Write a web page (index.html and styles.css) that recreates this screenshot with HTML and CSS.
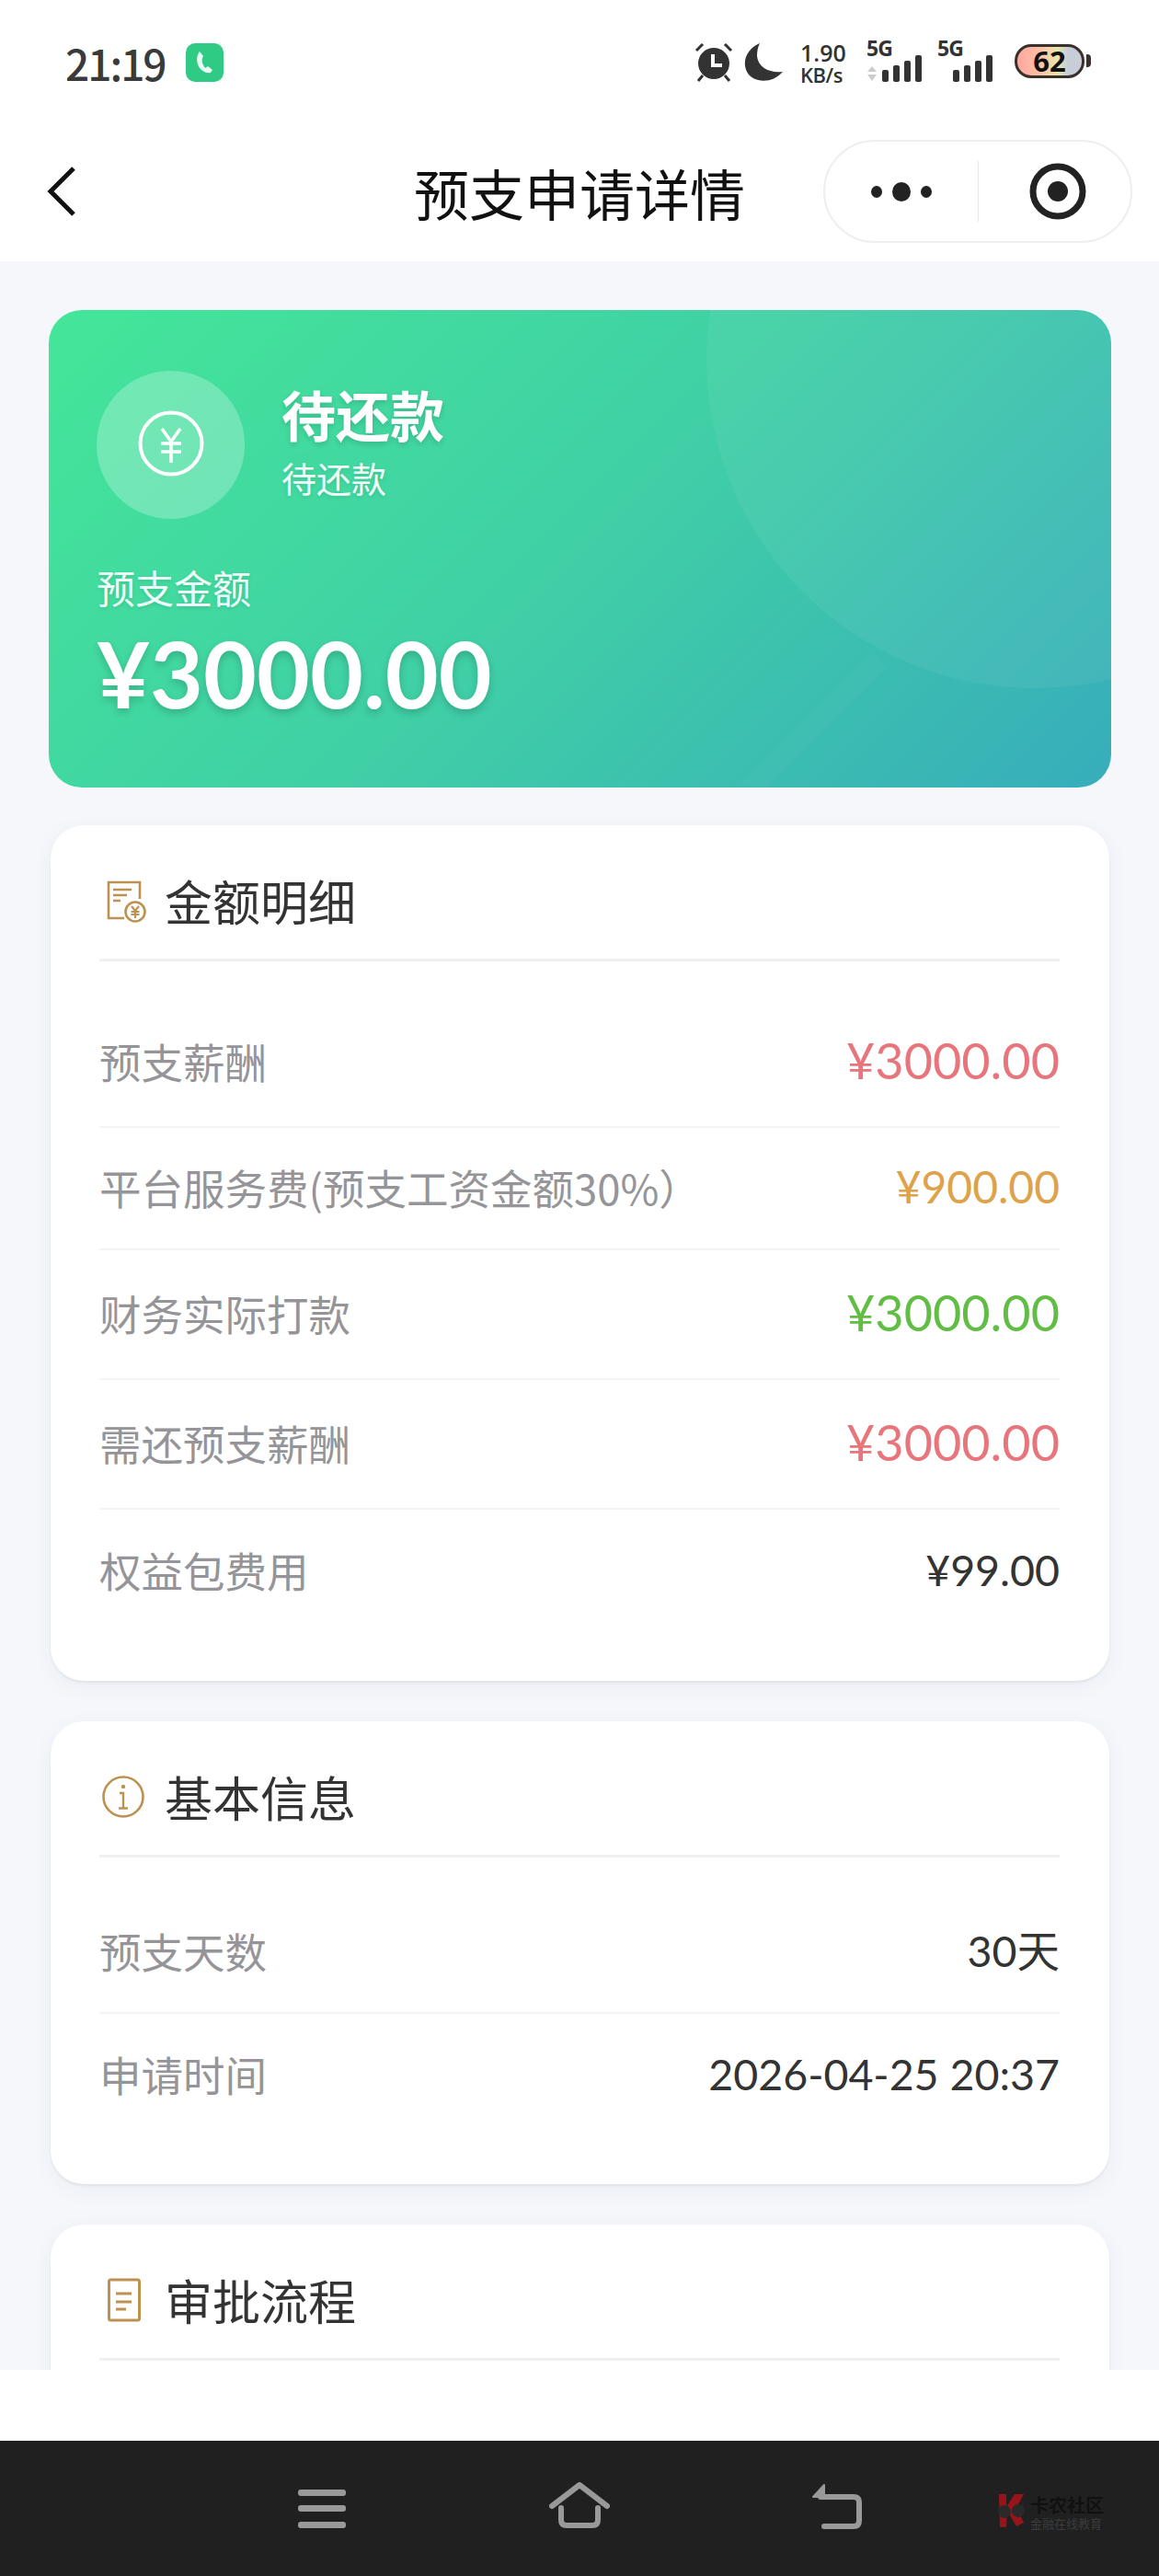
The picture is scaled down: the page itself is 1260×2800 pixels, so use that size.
FILE: index.html
```html
<!DOCTYPE html>
<html lang="zh-CN">

<head>
    <meta charset="UTF-8">
    <meta name="viewport" content="width=device-width, initial-scale=1.0">
    <title>预支申请详情</title>
    <link rel="stylesheet" href="styles.css">
</head>

<body>
    <div class="phone">
        <div class="status-bar">
            <div class="status-left">
                <span class="clock">21:19</span>
                <span class="call-badge">
                    <svg width="22" height="28" viewBox="0 0 22 28">
                        <path d="M6 2 C2 7 2 15 7 21 C10 24 14 26 18 25 L20 22 L15 18 L12 20 C9 16 8 12 9 9 L10 7 Z" fill="#e9fbf2" />
                    </svg>
                </span>
            </div>
            <div class="status-right">
                <svg class="st-alarm" width="44" height="42" viewBox="0 0 44 42">
                    <circle cx="22" cy="22" r="17" fill="#333" />
                    <path d="M21 12 V24 H31" fill="none" stroke="#fff" stroke-width="4" />
                    <path d="M3 8 L10 1 M41 8 L34 1 M5 41 L10 35 M39 41 L34 35" stroke="#333" stroke-width="3" />
                </svg>
                <svg class="st-moon" width="42" height="42" viewBox="0 0 42 42">
                    <path d="M17 0 C4 5 -3 19 3 31 C9 43 30 45 42 31 C28 33 15 26 14 14 C14 8 15 4 17 0 Z" fill="#333" />
                </svg>
                <div class="st-speed"><span>1.90</span><span class="st-unit">KB/s</span></div>
                <div class="st-signal">
                    <span class="st-5g">5G</span>
                    <svg width="64" height="44" viewBox="0 0 64 44">
                        <path d="M1 33 L6 27 L11 33 Z M1 36 L11 36 L6 43 Z" fill="#ccc" />
                        <rect x="17" y="31" width="7" height="13" rx="2" fill="#333" />
                        <rect x="29" y="26" width="7" height="18" rx="2" fill="#333" />
                        <rect x="41" y="21" width="7" height="23" rx="2" fill="#333" />
                        <rect x="53" y="15" width="7" height="29" rx="2" fill="#333" />
                    </svg>
                </div>
                <div class="st-signal">
                    <span class="st-5g">5G</span>
                    <svg width="64" height="44" viewBox="0 0 64 44">
                        <rect x="17" y="31" width="7" height="13" rx="2" fill="#333" />
                        <rect x="29" y="26" width="7" height="18" rx="2" fill="#333" />
                        <rect x="41" y="21" width="7" height="23" rx="2" fill="#333" />
                        <rect x="53" y="15" width="7" height="29" rx="2" fill="#333" />
                    </svg>
                </div>
                <div class="st-battery"><span class="st-level">62</span></div>
                <span class="st-nub"></span>
            </div>
        </div>

        <div class="nav-bar">
            <svg class="nav-back" width="32" height="56" viewBox="0 0 32 56">
                <path d="M29 3 L4 28 L29 53" fill="none" stroke="#111" stroke-width="5" />
            </svg>
            <h1 class="nav-title">预支申请详情</h1>
            <div class="capsule">
                <div class="capsule-more">
                    <i class="dot"></i><i class="dot dot-big"></i><i class="dot"></i>
                </div>
                <span class="capsule-line"></span>
                <div class="capsule-close">
                    <svg width="64" height="64" viewBox="0 0 64 64">
                        <circle cx="32" cy="32" r="27" fill="none" stroke="#222" stroke-width="7" />
                        <circle cx="32" cy="32" r="11" fill="#222" />
                    </svg>
                </div>
            </div>
        </div>

        <div class="content">
            <section class="hero">
                <span class="hero-circle"></span>
                <span class="hero-streak"></span>
                <div class="hero-top">
                    <div class="hero-icon">
                        <svg width="72" height="72" viewBox="0 0 72 72">
                            <circle cx="36" cy="36" r="33.5" fill="none" stroke="#fff" stroke-width="4" />
                            <path d="M26 20 L36 34 L46 20 M25 36 H47 M25 45 H47 M36 34 V57" fill="none" stroke="#fff" stroke-width="3.5" />
                        </svg>
                    </div>
                    <div class="hero-status">
                        <div class="hero-title">待还款</div>
                        <div class="hero-sub">待还款</div>
                    </div>
                </div>
                <div class="hero-label">预支金额</div>
                <div class="hero-amount">¥3000.00</div>
            </section>

            <section class="card">
                <div class="card-head">
                    <svg class="card-icon" width="48" height="48" viewBox="0 0 48 48">
                        <path d="M24 43 H7 V4 H41 V22" fill="none" stroke="#bd9152" stroke-width="2.6" />
                        <path d="M12 12 H32 M12 18 H27 M12 24 H20" stroke="#bd9152" stroke-width="2.6" />
                        <circle cx="36" cy="36" r="10.500" fill="#fff" stroke="#bd9152" stroke-width="2.6" />
                        <path d="M32 30 L36 35 L40 30 M31.500 36 H40.500 M31.500 39 H40.500 M36 35 V43" fill="none" stroke="#bd9152" stroke-width="2.2" />
                    </svg>
                    <h2 class="card-title">金额明细</h2>
                </div>
                <div class="rows rows-detail">
                    <div class="row row-big">
                        <span class="row-label">预支薪酬</span>
                        <span class="row-value big red">¥3000.00</span>
                    </div>
                    <div class="row">
                        <span class="row-label">平台服务费(预支工资金额30%）</span>
                        <span class="row-value mid orange">¥900.00</span>
                    </div>
                    <div class="row row-big">
                        <span class="row-label">财务实际打款</span>
                        <span class="row-value big green">¥3000.00</span>
                    </div>
                    <div class="row row-big">
                        <span class="row-label">需还预支薪酬</span>
                        <span class="row-value big red">¥3000.00</span>
                    </div>
                    <div class="row">
                        <span class="row-label">权益包费用</span>
                        <span class="row-value">¥99.00</span>
                    </div>
                </div>
            </section>

            <section class="card">
                <div class="card-head">
                    <svg class="card-icon" width="48" height="48" viewBox="0 0 48 48">
                        <circle cx="23" cy="24" r="21.500" fill="none" stroke="#bd9152" stroke-width="2.600" />
                        <circle cx="23" cy="13" r="2.200" fill="#bd9152" />
                        <path d="M19 20 H23 V36 M18 36.500 H28" fill="none" stroke="#bd9152" stroke-width="2.400" />
                    </svg>
                    <h2 class="card-title">基本信息</h2>
                </div>
                <div class="rows">
                    <div class="row">
                        <span class="row-label">预支天数</span>
                        <span class="row-value">30天</span>
                    </div>
                    <div class="row">
                        <span class="row-label">申请时间</span>
                        <span class="row-value">2026-04-25 20:37</span>
                    </div>
                </div>
            </section>

            <section class="card">
                <div class="card-head">
                    <svg class="card-icon" width="48" height="48" viewBox="0 0 48 48">
                        <rect x="7.500" y="2" width="33" height="44" rx="2" fill="none" stroke="#bd9152" stroke-width="3" />
                        <path d="M15 17 H32 M15 26 H32 M15 34 H26" stroke="#bd9152" stroke-width="3" />
                    </svg>
                    <h2 class="card-title">审批流程</h2>
                </div>
                <div class="rows"></div>
            </section>
        </div>

        <div class="bottom-white"></div>

        <div class="system-bar">
            <svg class="sys-menu" width="52" height="42" viewBox="0 0 52 42">
                <rect y="0" width="52" height="7" rx="3" fill="#999" />
                <rect y="17" width="52" height="7" rx="3" fill="#999" />
                <rect y="35" width="52" height="7" rx="3" fill="#999" />
            </svg>
            <svg class="sys-home" width="66" height="50" viewBox="0 0 66 50">
                <path d="M3 26 L33 3 L63 26" fill="none" stroke="#999" stroke-width="6" stroke-linecap="round" stroke-linejoin="round" />
                <path d="M13 28 V41 Q13 47 19 47 H47 Q53 47 53 41 V28" fill="none" stroke="#999" stroke-width="6" stroke-linecap="round" />
            </svg>
            <svg class="sys-back" width="55" height="50" viewBox="0 0 55 50">
                <path d="M2 15 L14 2 V15 Z" fill="#999" stroke="#999" stroke-width="2" stroke-linejoin="round" />
                <path d="M10 15 H46 Q52 15 52 21 V41 Q52 47 46 47 H14" fill="none" stroke="#999" stroke-width="6" stroke-linecap="round" stroke-linejoin="round" />
            </svg>
            <div class="watermark">
                <svg width="34" height="36" viewBox="0 0 34 36">
                    <path d="M3 0 H11 V14 L20 0 H30 L22 15 L30 31 L22 35 L12 18 L11 36 H4 Z" fill="#96141a" />
                    <circle cx="9" cy="19" r="7" fill="#2a2a2a" />
                    <circle cx="24" cy="18" r="7" fill="#2a2a2a" />
                </svg>
                <div class="wm-text">
                    <span class="wm-name">卡农社区</span>
                    <span class="wm-sub">金融在线教育</span>
                </div>
            </div>
        </div>
    </div>
</body>

</html>
```
FILE: styles.css
```css
* {
    box-sizing: border-box;
}

body {
    margin: 0;
    font-family: "Lato", "Noto Sans CJK SC", sans-serif;
    color: #333;
    background: #fff;
}

h1,
h2 {
    margin: 0;
    font-weight: 400;
}

.phone {
    width: 1260px;
    height: 2800px;
    display: flex;
    flex-direction: column;
    overflow: hidden;
}

/* status bar */
.status-bar {
    height: 140px;
    flex: none;
    display: flex;
    justify-content: space-between;
    padding: 47px 74px 0 71px;
    background: #fff;
}

.status-left {
    display: flex;
    align-items: flex-start;
    gap: 22px;
}

.clock {
    font-family: "Noto Sans CJK SC", sans-serif;
    font-size: 46px;
    line-height: 42px;
    font-weight: 500;
    color: #3a3a3a;
    letter-spacing: -2px;
}

.call-badge {
    width: 41px;
    height: 42px;
    border-radius: 10px;
    background: #2fcb84;
    display: flex;
    align-items: center;
    justify-content: center;
}

.status-right {
    display: flex;
    align-items: flex-start;
}

.st-moon {
    margin-left: 11px;
}

.st-speed {
    margin-left: 19px;
    margin-top: -3px;
    width: 52px;
    display: flex;
    flex-direction: column;
    font-family: "Open Sans", sans-serif;
    font-size: 25px;
    line-height: 26px;
    font-weight: 600;
    color: #333;
    white-space: nowrap;
}

.st-unit {
    font-size: 22px;
    line-height: 22px;
    letter-spacing: -0.5px;
}

.st-signal {
    position: relative;
    width: 64px;
    height: 44px;
    margin-left: 20px;
}

.st-signal + .st-signal {
    margin-left: 13px;
}

.st-signal svg {
    display: block;
    margin-top: -2px;
}

.st-5g {
    position: absolute;
    left: 0;
    top: -7px;
    font-family: "Open Sans", sans-serif;
    font-size: 23px;
    line-height: 24px;
    font-weight: 700;
    color: #333;
    letter-spacing: -1px;
}

.st-battery {
    width: 76px;
    height: 37px;
    margin-left: 20px;
    margin-top: 1px;
    border: 3px solid #3a302c;
    border-radius: 18px;
    background: linear-gradient(90deg, #ffa79d 0%, #ffc0a8 35%, #e8e6a8 62%, #c9cdd8 78%, #c9cdd8 100%);
    display: flex;
    align-items: center;
    justify-content: center;
}

.st-level {
    font-family: "Open Sans", sans-serif;
    font-size: 31px;
    line-height: 31px;
    font-weight: 700;
    color: #111;
}

.st-nub {
    width: 5px;
    height: 14px;
    margin-top: 12px;
    margin-left: 2px;
    border-radius: 0 4px 4px 0;
    background: #3a302c;
}

/* nav */
.nav-bar {
    position: relative;
    height: 144px;
    flex: none;
    display: flex;
    align-items: center;
    justify-content: center;
    background: #fff;
}

.nav-back {
    position: absolute;
    left: 51px;
    top: 40px;
}

.nav-title {
    font-family: "Noto Sans CJK SC", sans-serif;
    font-size: 60px;
    line-height: 80px;
    color: #111;
    margin-top: -6px;
}

.capsule {
    position: absolute;
    left: 895px;
    top: 12px;
    width: 336px;
    height: 112px;
    border: 2px solid #eee;
    border-radius: 56px;
    display: flex;
    align-items: center;
}

.capsule-more {
    width: 166px;
    display: flex;
    align-items: center;
    justify-content: center;
    gap: 11px;
}

.dot {
    width: 12px;
    height: 13px;
    border-radius: 50%;
    background: #222;
}

.dot-big {
    width: 20px;
    height: 21px;
}

.capsule-line {
    width: 1px;
    height: 66px;
    background: #e8e8e8;
}

.capsule-close {
    flex: 1;
    display: flex;
    justify-content: center;
    padding-left: 7px;
}

.capsule-close svg {
    display: block;
}

/* content */
.content {
    flex: 1;
    min-height: 0;
    overflow: hidden;
    padding: 53px 52px 0 53px;
    background: #f5f7fb;
}

.hero {
    position: relative;
    height: 519px;
    padding: 66px 52px 0;
    border-radius: 36px;
    overflow: hidden;
    background: linear-gradient(135deg, #44e699 0%, #40cfa6 50%, #37adbb 100%);
    color: #fff;
}

.hero-circle {
    position: absolute;
    left: 715px;
    top: -303px;
    width: 714px;
    height: 714px;
    border-radius: 50%;
    background: rgba(255, 255, 255, 0.055);
}

.hero-streak {
    position: absolute;
    left: 732px;
    top: 439px;
    width: 200px;
    height: 24px;
    background: rgba(255, 255, 255, 0.025);
    transform: rotate(-45deg);
}

.hero-top {
    position: relative;
    display: flex;
    align-items: flex-start;
    gap: 40px;
}

.hero-icon {
    width: 161px;
    height: 161px;
    border-radius: 50%;
    background: rgba(255, 255, 255, 0.25);
    display: flex;
    align-items: center;
    justify-content: center;
}

.hero-icon svg {
    display: block;
    margin-top: -4px;
}

.hero-status {
    padding-top: 8px;
}

.hero-title {
    font-family: "Noto Sans CJK SC", sans-serif;
    font-size: 59px;
    line-height: 78px;
    font-weight: 700;
    text-shadow: 0 3px 6px rgba(0, 0, 0, 0.15);
}

.hero-sub {
    font-family: "Noto Sans CJK SC", sans-serif;
    font-size: 38px;
    line-height: 59px;
    opacity: 0.92;
    text-shadow: 0 2px 4px rgba(0, 0, 0, 0.1);
}

.hero-label {
    position: relative;
    margin-top: 44px;
    font-family: "Noto Sans CJK SC", sans-serif;
    font-size: 42px;
    line-height: 60px;
    opacity: 0.92;
    text-shadow: 0 2px 4px rgba(0, 0, 0, 0.1);
}

.hero-amount {
    position: relative;
    margin-top: 8px;
    font-size: 100px;
    line-height: 110px;
    font-weight: 700;
    text-shadow: 0 4px 8px rgba(0, 0, 0, 0.18);
}

.card {
    margin: 41px 2px 44px 2px;
    padding: 0 54px 0 53px;
    border-radius: 36px;
    background: #fff;
    box-shadow: 0 2px 3px rgba(0, 0, 0, 0.06), 0 6px 24px rgba(30, 50, 90, 0.05);
}

.card + .card {
    margin-top: 44px;
}

.card-head {
    display: flex;
    align-items: center;
    height: 148px;
    padding-top: 18px;
    border-bottom: 3px solid #f0f0f0;
}

.card-icon {
    flex: none;
    margin-left: 3px;
    display: block;
}

.card-title {
    margin-left: 20px;
    font-family: "Noto Sans CJK SC", sans-serif;
    font-size: 52px;
    line-height: 70px;
    color: #333;
}

.rows {
    padding: 37px 0 52px;
}

.rows-detail {
    padding-top: 40px;
    padding-bottom: 53px;
}

.row {
    display: flex;
    align-items: center;
    justify-content: space-between;
    min-height: 133px;
    padding-bottom: 4px;
    border-bottom: 2px solid #f4f4f4;
}

.row-big {
    min-height: 141px;
}

.row:last-child {
    border-bottom: none;
}

.row-label {
    font-family: "Noto Sans CJK SC", sans-serif;
    font-size: 45.5px;
    line-height: 62px;
    color: #959599;
}

.row-value {
    font-size: 46.5px;
    line-height: 62px;
    color: #333;
}

.mid {
    font-size: 48px;
}

.big {
    font-size: 54px;
}

.red {
    color: #e8757c;
}

.orange {
    color: #dda24a;
}

.green {
    color: #62bd45;
}

/* bottom */
.bottom-white {
    height: 77px;
    flex: none;
    background: #fff;
}

.system-bar {
    position: relative;
    height: 147px;
    flex: none;
    background: #202020;
}

.sys-menu {
    position: absolute;
    left: 324px;
    top: 53px;
}

.sys-home {
    position: absolute;
    left: 597px;
    top: 45px;
}

.sys-back {
    position: absolute;
    left: 882px;
    top: 46px;
}

.watermark {
    position: absolute;
    left: 1083px;
    top: 58px;
    display: flex;
    gap: 3px;
}

.wm-text {
    display: flex;
    flex-direction: column;
    font-family: "Noto Sans CJK SC", sans-serif;
}

.wm-name {
    font-size: 20px;
    line-height: 24px;
    font-weight: 700;
    color: #111;
}

.wm-sub {
    font-size: 13px;
    line-height: 16px;
    color: #3c3c3c;
}
```
